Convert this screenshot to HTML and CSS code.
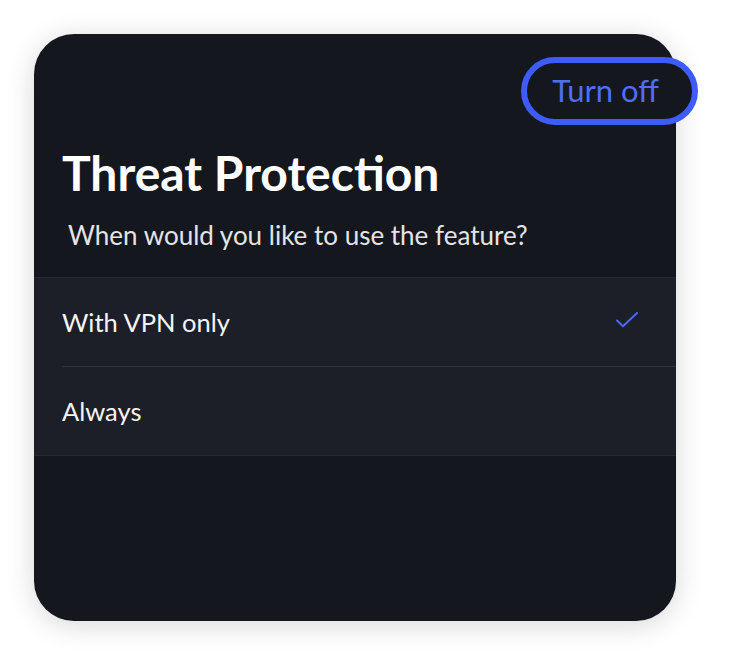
FILE: index.html
```html
<!DOCTYPE html>
<html>
<head>
<meta charset="utf-8">
<link rel="stylesheet" href="styles.css">
</head>
<body>
<div class="card">
  <div class="top">
    <button class="turn-off">Turn off</button>
  </div>
  <h1 class="title">Threat Protection</h1>
  <p class="subtitle">When would you like to use the feature?</p>
  <ul class="options">
    <li class="option">
      <span>With VPN only</span>
      <svg class="check" width="22" height="16" viewBox="0 0 22 16"><path d="M1 8.5 L7 14.2 L21 1" fill="none" stroke="#4a68f0" stroke-width="2" stroke-linecap="round" stroke-linejoin="round"/></svg>
    </li>
    <li class="option"><span>Always</span></li>
  </ul>
</div>
</body>
</html>
```
FILE: styles.css
```css
html, body {
  margin: 0;
  padding: 0;
  background: #ffffff;
}
body {
  padding: 34px;
  font-family: Lato, "Noto Sans", sans-serif;
}
.card {
  width: 642px;
  height: 587px;
  box-sizing: border-box;
  background: #15171f;
  border-radius: 40px;
  box-shadow: 0 4px 28px rgba(0, 0, 0, 0.16);
  display: flex;
  flex-direction: column;
}
.top {
  display: flex;
  justify-content: flex-end;
  padding-top: 23px;
  margin-right: -22px;
}
.turn-off {
  box-sizing: border-box;
  width: 177px;
  height: 68px;
  border: 6px solid #3d5cfb;
  border-radius: 34px;
  background: #15171f;
  color: #4f6ef5;
  font-family: Lato, "Noto Sans", sans-serif;
  font-size: 31px;
  padding: 0 8px 2px 0;
}
.title {
  margin: 20px 0 0 28px;
  color: #ffffff;
  font-size: 48px;
  font-weight: 700;
  line-height: 56px;
}
.subtitle {
  margin: 19px 0 0 34px;
  color: #e4e4e6;
  font-size: 26px;
  line-height: 30px;
}
.options {
  list-style: none;
  margin: 27px 0 0 0;
  padding: 0 0 0 28px;
  background: #1c1f28;
  border-top: 1px solid #262932;
  border-bottom: 1px solid #262932;
}
.option {
  display: flex;
  align-items: center;
  justify-content: space-between;
  height: 88px;
  padding-right: 38px;
  color: #f4f4f5;
  font-size: 25.5px;
}
.option + .option {
  border-top: 1px solid #30333c;
}
.check {
  display: block;
  margin-top: -4px;
}
```
